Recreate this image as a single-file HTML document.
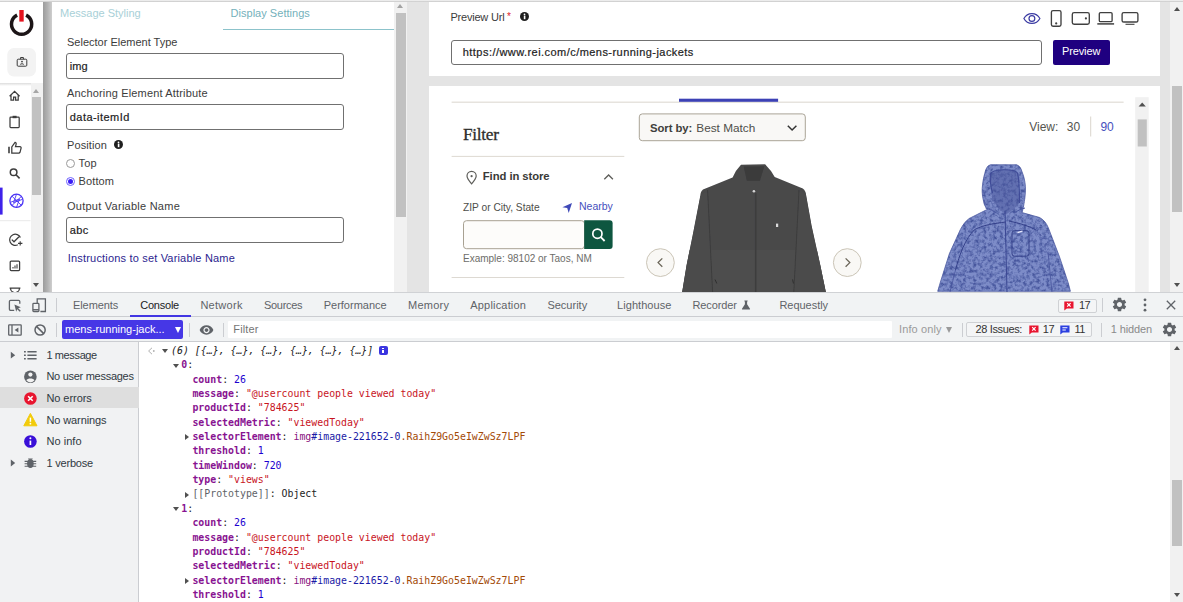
<!DOCTYPE html>
<html lang="en"><head><meta charset="utf-8"><title>Preview</title>
<style>
*{box-sizing:border-box;margin:0;padding:0}
html,body{width:1183px;height:602px;overflow:hidden;background:#e8e8e8}
body{position:relative;font-family:"Liberation Sans",sans-serif;font-size:11px;color:#333}
.abs,.abs *{position:absolute}
.t{position:absolute;white-space:pre;line-height:1}
/* ---------- app area ---------- */
#app{position:absolute;left:0;top:0;width:1183px;height:292px;background:#e4e4e4;overflow:hidden}
#topline{position:absolute;left:0;top:0;width:1183px;height:1.700px;background:linear-gradient(#ececec 0,#ececec 45%,#cfcfcf 60%,#d6d6d6 100%);z-index:50}
#side{position:absolute;left:0;top:0;width:43px;height:292px;background:#fff}
#sideshadow{position:absolute;left:43px;top:0;width:9.600px;height:292px;background:linear-gradient(90deg,#9c9c9c 0,#b2b2b2 45%,#cccccc 86%,#fff 100%)}
#panel{position:absolute;left:52px;top:0;width:342.200px;height:292px;background:#fff}
.lbl{color:#3c3c3c;font-size:11px}
.inp{position:absolute;left:66px;width:278px;height:26px;border:1px solid #707070;border-radius:3px;background:#fff}
.inp span{position:absolute;left:3px;top:7px;font-size:11px;color:#222;-webkit-text-stroke:.2px #222;line-height:1;white-space:pre}
.vsb{position:absolute;background:#f1f1f1}
.vsb i{position:absolute;background:#c1c1c1}
.arr-up{position:absolute;width:0;height:0;border-left:3.5px solid transparent;border-right:3.5px solid transparent;border-bottom:4px solid #505050}
.arr-dn{position:absolute;width:0;height:0;border-left:3.5px solid transparent;border-right:3.5px solid transparent;border-top:4px solid #505050}
.card{position:absolute;background:#fff}
/* ---------- devtools ---------- */
#dt{position:absolute;left:0;top:292px;width:1183px;height:310px;background:#fff;border-top:1.400px solid #d0d2d5;font-size:11px;color:#5f6368}
#tabs{position:absolute;left:0;top:0;width:1183px;height:24px;background:#f1f3f4;border-bottom:1px solid #cbcdd1}
#tool{position:absolute;left:0;top:24px;width:1183px;height:25px;background:#f1f3f4;border-bottom:1px solid #cbcdd1}
.tab{position:absolute;top:7px;line-height:1;white-space:pre;color:#5f6368}
.sep{position:absolute;width:1px;background:#cbcdd1}
#csb{position:absolute;left:0;top:48.600px;width:139px;height:261px;background:#f1f2f3;border-right:1px solid #cbcdd1}
.row{position:absolute;left:0;width:139px;height:21px}
.row .t{left:46px;top:5px;color:#303942}
#con{position:absolute;left:140px;top:48.600px;width:1043px;height:261px;background:#fff;font-family:"DejaVu Sans Mono","Liberation Mono",monospace;font-size:9.9px}
.ln{position:absolute;white-space:pre;line-height:1;height:12px}
.k{color:#881391;font-weight:bold}
.n{color:#1c00cf}
.s{color:#c8141e}
.g{color:#5f6368}
.d{color:#222}
.tri{position:absolute;width:0;height:0}
</style></head><body>
<div id="app">
<div id="side">
<svg style="position:absolute;left:0;top:0" width="43" height="84" viewBox="0 0 43 84">
<path d="M17.1 15.1 A10.1 10.1 0 1 0 26.1 15.1" fill="none" stroke="#1c1517" stroke-width="3.5"/>
<rect x="19.3" y="10" width="4.4" height="11.6" fill="#e5141f"/>
<rect x="7.3" y="48.1" width="28.7" height="28.4" rx="6.5" fill="#f3f3f3"/>
<g fill="none" stroke="#3a3a3a" stroke-width="1">
<rect x="17.2" y="59.2" width="9.6" height="7" rx="1"/>
<path d="M20.6 59.2v-1.7h2.8v1.7"/>
<circle cx="22" cy="61.6" r=".9" fill="#3a3a3a" stroke="none"/>
<path d="M20.2 64.6c.3-1.1 3.3-1.1 3.6 0" />
</g>
</svg>
<div style="position:absolute;left:0;top:83px;width:43px;height:3px;background:linear-gradient(#dcdcdc,#fff)"></div>
<div class="vsb" style="left:30.600px;top:83px;width:12px;height:209px"><i style="left:1.100px;top:14.200px;width:9.300px;height:98.200px"></i><b class="arr-up" style="left:2.400px;top:5.900px;border-bottom-color:#a6a6a6"></b><b class="arr-dn" style="left:2.400px;top:200px"></b></div>
<svg style="position:absolute;left:0;top:84px" width="31" height="208" viewBox="0 84 31 208" fill="none" stroke="#3d3d3d" stroke-width="1.25">
<!-- home -->
<path d="M9.6 96.2 14.6 91.4 19.6 96.2M11 95v5.2h2.6v-3h2v3h2.6V95"/>
<!-- clipboard -->
<rect x="10" y="117.2" width="9.2" height="10.3" rx=".8"/><rect x="12.6" y="115.8" width="4" height="2.4" fill="#3d3d3d" stroke="none"/>
<!-- thumb -->
<path d="M9 146.8v6.4" stroke-width="1.6"/><path d="M11.8 153.2v-6.2l3.2-4.6c1 .2 1.4 1 1.1 2l-.6 2.2h4.4c.9 0 1.4.7 1.2 1.5l-1.1 4.2c-.2.6-.7.9-1.3.9z"/>
<!-- search -->
<circle cx="13.6" cy="172.3" r="3.3" stroke-width="1.5"/><path d="M16 174.8l3.6 3.6" stroke-width="1.6"/>
<!-- active -->
<rect x="0" y="187.6" width="2.6" height="27" fill="#3f22ea" stroke="none"/>
<g stroke="#4a34f5" stroke-width="1.3"><circle cx="16.5" cy="200.8" r="6.6"/><path d="M12 196.2l9.2 9M21.4 196.4l-9.4 9M16.5 194.2l-3 8.4 8.8-3.2M16.5 207.4l3-8.4-8.8 3.2" stroke-width=".9"/></g>
<path d="M0 220.7h30.5" stroke="#e9e9e9" stroke-width="1"/>
<!-- check plus -->
<path d="M20.4 237.6a5.6 5.6 0 1 0-2.6 7.2"/><path d="M11.8 239.6l2.2 2.2 5-5"/><path d="M20.2 241.2v4.4M18 243.4h4.4" stroke-width="1.1"/>
<!-- chart -->
<rect x="10.2" y="261" width="9.4" height="9.6" rx="1"/><path d="M13 268.4v-1.4M15 268.4v-2.8M17 268.4v-4.2" stroke-width="1.1"/>
<!-- trophy -->
<path d="M9.6 288h10.8M10.6 288.4c0 2 1.4 3.6 3 3.6M19.4 288.4c0 2-1.4 3.6-3 3.6"/>
</svg>
</div>
<div id="sideshadow"></div>
<div id="panel">
<span class="t" id="p1" style="left:8px;top:8px;color:#a8d0d7">Message Styling</span>
<span class="t" id="p2" style="left:178.5px;top:8px;color:#74b1bb;letter-spacing:.03px">Display Settings</span>
<div style="position:absolute;left:171px;top:29px;width:171px;height:1px;background:#8cc3cb"></div>
<span class="t lbl" id="p3" style="left:15px;top:37px">Selector Element Type</span>
<div class="inp" style="left:13.8px;top:53px"><span>img</span></div>
<span class="t lbl" id="p4" style="left:15px;top:88.3px;letter-spacing:.16px">Anchoring Element Attribute</span>
<div class="inp" style="left:13.8px;top:104px"><span style="letter-spacing:.45px">data-itemId</span></div>
<span class="t lbl" id="p5" style="left:15px;top:139.9px;letter-spacing:.1px">Position</span>
<svg style="position:absolute;left:61.900px;top:140px" width="9" height="9" viewBox="0 0 9 9"><circle cx="4.5" cy="4.5" r="4.5" fill="#1f1f1f"/><rect x="3.8" y="3.6" width="1.6" height="3.6" fill="#fff"/><circle cx="4.5" cy="2.3" r=".9" fill="#fff"/></svg>
<div style="position:absolute;left:13.600px;top:158.900px;width:9.200px;height:9.200px;border:1px solid #9a9a9a;border-radius:50%;background:#fff"></div>
<span class="t lbl" id="p6" style="left:26.600px;top:157.500px;letter-spacing:.1px">Top</span>
<div style="position:absolute;left:13.600px;top:176.900px;width:9.200px;height:9.200px;border:1px solid #6f62ff;border-radius:50%;background:#fff"><i style="position:absolute;left:1.100px;top:1.100px;width:5px;height:5px;border-radius:50%;background:#3a1cf5"></i></div>
<span class="t lbl" id="p7" style="left:26.600px;top:175.500px;letter-spacing:.1px">Bottom</span>
<span class="t lbl" id="p8" style="left:15px;top:200.8px;letter-spacing:.25px">Output Variable Name</span>
<div class="inp" style="left:13.8px;top:217px"><span style="letter-spacing:.3px">abc</span></div>
<span class="t" id="p9" style="left:15.8px;top:252.6px;color:#2c1e8f;letter-spacing:.18px">Instructions to set Variable Name</span>
</div>
<div class="vsb" style="left:394.200px;top:0;width:13px;height:292px"><i style="left:1.800px;top:12.700px;width:9.800px;height:204.100px"></i><b class="arr-up" style="left:3px;top:4.300px;border-bottom-color:#a3a3a3"></b></div>
<div class="card" id="card1" style="left:428.5px;top:0;width:731.5px;height:75.7px">
<span class="t lbl" id="c1" style="left:21.9px;top:12px;letter-spacing:-.2px">Preview Url</span>
<span class="t" style="left:78.500px;top:12.300px;color:#e0202a;font-size:10px">*</span>
<svg style="position:absolute;left:91.700px;top:12.400px" width="9" height="9" viewBox="0 0 9 9"><circle cx="4.5" cy="4.5" r="4.5" fill="#1f1f1f"/><rect x="3.8" y="3.6" width="1.6" height="3.6" fill="#fff"/><circle cx="4.5" cy="2.3" r=".9" fill="#fff"/></svg>
<div class="inp" style="left:22.100px;top:39.500px;width:591.200px;height:25.300px"><span id="c2" style="left:11.200px;top:6.600px;letter-spacing:.45px">https://www.rei.com/c/mens-running-jackets</span></div>
<div style="position:absolute;left:624.1px;top:39.6px;width:57.5px;height:25.1px;background:#1f0080;border-radius:2px"><span class="t" id="c3" style="left:9.3px;top:6.4px;color:#fff;font-size:11px;letter-spacing:-.1px">Preview</span></div>
<svg style="position:absolute;left:590px;top:8px" width="125" height="22" viewBox="1018.5 8 125 22" fill="none" stroke="#404040" stroke-width="1.350">
<g stroke="#3b3ba3" stroke-width="1.2"><path d="M1023.4 18.5c3.6-6.6 12.4-6.6 16 0-3.6 6.6-12.4 6.600-16 0z"/><circle cx="1031.400" cy="18.5" r="2.900"/></g>
<rect x="1050.9" y="10.6" width="9.6" height="15.6" rx="1.6"/><circle cx="1055.700" cy="23.400" r="1.100" fill="#404040" stroke="none"/>
<rect x="1071.8" y="12.6" width="17" height="11.6" rx="1.8"/><circle cx="1085.400" cy="18.400" r="1.100" fill="#404040" stroke="none"/>
<rect x="1098.800" y="12.6" width="12.800" height="9" rx="1.200"/><path d="M1096.800 23.900h16.800" stroke-width="1.500"/>
<rect x="1121.600" y="12.6" width="15.800" height="9.400" rx="1.600"/><path d="M1125 24.300h9" stroke-width="1.100"/>
</svg>
</div>
<div class="card" id="card2" style="left:428.5px;top:86.3px;width:731.5px;height:206px;overflow:hidden">
<div id="pg" style="position:absolute;left:-428.5px;top:-86.3px;width:1183px;height:292px">
<svg id="pgsvg" style="position:absolute;left:0;top:0" width="1183" height="292" viewBox="0 0 1183 292">
<rect x="451.6" y="101.700" width="672" height=".9" fill="#d6d1c8"/>
<rect x="679" y="98.700" width="99.100" height="3.100" fill="#3c41b5"/>
<rect x="451.6" y="155.9" width="172.7" height=".9" fill="#dad5cd"/>
<rect x="451.6" y="277.1" width="172.7" height=".9" fill="#dad5cd"/>
<!-- sort box -->
<rect x="639.3" y="113.9" width="166" height="26.8" rx="3" fill="#f9f8f6" stroke="#aaa497" stroke-width="1"/>
<path d="M787.8 125.8l4.3 4.2 4.3-4.2" fill="none" stroke="#333" stroke-width="1.5"/>
<!-- pin -->
<path d="M471.600 183.800c-2.800-3.200-4.600-5.400-4.600-7.800a4.600 4.600 0 0 1 9.200 0c0 2.400-1.800 4.600-4.600 7.800z" fill="none" stroke="#5e5e5a" stroke-width="1.200"/><circle cx="471.600" cy="176.200" r="1.100" fill="#5e5e5a"/>
<path d="M604.300 179.300l4.300-4.300 4.300 4.300" fill="none" stroke="#5e5e5a" stroke-width="1.300"/>
<!-- nearby arrow -->
<path d="M562.400 207.200l9.600-4.300-3.300 10-1.500-4.800z" fill="#3f49b8"/>
<!-- zip input -->
<rect x="463.500" y="220.700" width="121" height="28" rx="3" fill="#fdfcfa" stroke="#a8a192" stroke-width="1"/>
<path d="M584.200 220.200h25.400a3 3 0 0 1 3 3v22.800a3 3 0 0 1-3 3h-25.400z" fill="#0e5640"/>
<circle cx="597.400" cy="233.700" r="4.600" fill="none" stroke="#fff" stroke-width="1.700"/><path d="M600.800 237.200l3.800 3.800" stroke="#fff" stroke-width="1.800"/>
<!-- arrows -->
<circle cx="660.4" cy="262.600" r="13.900" fill="#f9f8f5" stroke="#cbc5b7" stroke-width="1"/><path d="M662.300 258.400l-4.200 4.200 4.200 4.200" fill="none" stroke="#6a6558" stroke-width="1.300"/>
<circle cx="847.300" cy="262.600" r="13.900" fill="#f9f8f5" stroke="#cbc5b7" stroke-width="1"/><path d="M845.600 258.400l4.200 4.200-4.200 4.200" fill="none" stroke="#6a6558" stroke-width="1.300"/>
<!-- view sep -->
<rect x="1090.200" y="116.500" width="1" height="20" fill="#dad5cd"/>
<!-- inner scrollbar -->
<rect x="1135.200" y="97.200" width="13.500" height="195" fill="#f1f1f1"/>
<rect x="1137.700" y="119.400" width="9.100" height="27.100" fill="#c1c1c1"/>
<path d="M1138.600 106.400l3.600-4 3.600 4z" fill="#505050"/>
<defs>
<filter id="spk" x="0" y="0" width="100%" height="100%" color-interpolation-filters="sRGB"><feTurbulence type="fractalNoise" baseFrequency="0.3" numOctaves="3" seed="7" result="n"/><feColorMatrix in="n" values="0 0 0 0 .27  0 0 0 0 .33  0 0 0 0 .61  0 0 0 2.5 -1.0"/><feComposite in2="SourceGraphic" operator="in"/></filter>
<filter id="bl"><feGaussianBlur stdDeviation=".45"/></filter>
<clipPath id="gj"><path d="M741 164.800L765.100 164.200L771 171L774.700 177.100L802.800 188.500Q806 191 806.100 195L811.600 225.800L820.300 265.300L825.800 292H682.200L686.600 265.300L693.200 232.400L700.200 196.200Q700.500 191.500 703 189.600L732.600 177.500L735.900 171Z"/></clipPath>
</defs>
<g filter="url(#bl)">
<g clip-path="url(#gj)">
<rect x="680" y="160" width="150" height="135" fill="#49494a"/>
<rect x="680" y="250" width="150" height="45" fill="#4e4e4e"/>
<path d="M682 292l4.600-26.700 6.600-32.900 7-36.200 5 -4 2.400 0 5 100z" fill="#4b4b4c"/>
<path d="M826 292l-5.700-26.700-8.700-39.500-5.500-30.800-4-4.500-3 0-5 101.500z" fill="#4b4b4c"/>
<path d="M707.600 190l5 102M799 190l-5.200 102" stroke="#3b3b3b" stroke-width=".9" fill="none"/>
<path d="M743.600 166.600l20.800-.4-4.400 14.600h-13.200z" fill="#3b3b3b"/>
<path d="M755.700 193v99" stroke="#3c3c3c" stroke-width="1.600"/>
<circle cx="753.900" cy="191.200" r="1.300" fill="#d4d4d4"/>
<rect x="776" y="223.600" width="2.200" height="3.400" fill="#dcdcdc"/>
<path d="M715 279.500l1.800 4M792.600 279.500l.8 4" stroke="#2e2e2e" stroke-width="1"/>
</g>
<g id="bj">
<path id="bjp" d="M987.500 209.300c-2.400-2.600-3.600-5-3.800-7.600-1.200-4.400-1.700-8.800-1.500-13.200.4-5.600 1.200-10.600 2.600-15.300 1-4.400 2.400-7.400 5.500-8.400h26.300c3 .8 4.400 3.400 5.500 7.200 1.900 4.500 2.900 9.300 3.300 14.300.2 5.200-.2 10.300-1.100 15.400-.4 3.600-1.200 7.300-2.200 10.900l17.500 4.900c4.400 2.400 7 6 8.800 10.500l11 28.500 8.800 26.300 2.200 8.500h-132.700l2.700-9.200 9-28.500 11-24.100c2.400-4.600 5-8.200 8.800-11z" fill="#7d8cc8" stroke="#4f5da2" stroke-width=".8"/>
<path d="M987.500 209.300c-2.400-2.600-3.600-5-3.800-7.600-1.200-4.400-1.700-8.800-1.500-13.200.4-5.600 1.200-10.600 2.600-15.300 1-4.400 2.400-7.400 5.500-8.400h26.300c3 .8 4.400 3.400 5.500 7.200 1.900 4.500 2.900 9.300 3.300 14.300.2 5.200-.2 10.300-1.100 15.400-.4 3.600-1.200 7.300-2.200 10.900l17.500 4.900c4.400 2.400 7 6 8.800 10.500l11 28.500 8.800 26.300 2.200 8.500h-132.700l2.700-9.200 9-28.500 11-24.100c2.400-4.600 5-8.200 8.800-11z" fill="#000" filter="url(#spk)"/>
<path d="M990.500 174c2-5.500 24-5.500 27-1l2 30c-3 4-8 8-13.500 11.500-5-3-10-8.500-14-16z" fill="#4c5a9e" opacity=".55"/>
<path d="M992.500 193c-2-7-2.600-13-2-19 2-5.500 24-5.500 27-1 1.500 6 2 14 2 30" fill="none" stroke="#3f4c98" stroke-width="1.200"/>
<path d="M985.500 208c4 1 8 3 11 5M1025 208c-4 1-8 3-11 5" fill="none" stroke="#4a58a2" stroke-width="1"/>
<path d="M1005 211l2 81" stroke="#3d4a95" stroke-width="1.100"/>
<path d="M955.400 270.500c4-16 10-32 19.300-41 10-5 20-6 31-7.500M1009 221c10 2 20 5 27 9" fill="none" stroke="#34408a" stroke-width="1"/>
<path d="M950 292l5.400-21.500M1052 292l-4-40" fill="none" stroke="#46539c" stroke-width=".8"/>
<rect x="1012" y="230.700" width="17" height="25.500" rx="2.500" fill="none" stroke="#34408a" stroke-width="1"/>
<path d="M1017.500 232.600l5-1.600" stroke="#eef" stroke-width="1.200"/>
</g>
</g>
</svg>
<span class="t" style="left:463px;top:125.700px;font:17.300px 'Liberation Serif',serif;color:#2e2e2b;letter-spacing:-.3px;line-height:1;-webkit-text-stroke:.3px #2e2e2b">Filter</span>
<span class="t" style="left:650px;top:122.800px;font:bold 11.300px 'Liberation Sans',sans-serif;color:#3f3f3c;line-height:1;letter-spacing:-.05px">Sort by:</span>
<span class="t" style="left:696.300px;top:122.600px;font:11.800px 'Liberation Sans',sans-serif;color:#4e4e4a;line-height:1">Best Match</span>
<span class="t" style="left:482.800px;top:170.500px;font:bold 11.300px 'Liberation Sans',sans-serif;color:#3a3a37;line-height:1;letter-spacing:-.08px">Find in store</span>
<span class="t" style="left:463px;top:203.200px;font:10.200px 'Liberation Sans',sans-serif;color:#4e4e4a;line-height:1">ZIP or City, State</span>
<span class="t" style="left:579px;top:201px;font:10.500px 'Liberation Sans',sans-serif;color:#4650bd;line-height:1">Nearby</span>
<span class="t" style="left:463px;top:254px;font:10px 'Liberation Sans',sans-serif;color:#6d6d69;line-height:1">Example: 98102 or Taos, NM</span>
<span class="t" style="left:1029.200px;top:121px;font:12px 'Liberation Sans',sans-serif;color:#55554f;line-height:1">View:</span>
<span class="t" style="left:1066.800px;top:121px;font:12px 'Liberation Sans',sans-serif;color:#55554f;line-height:1">30</span>
<span class="t" style="left:1100.400px;top:121px;font:12px 'Liberation Sans',sans-serif;color:#4650bd;line-height:1">90</span>
</div>
</div>
<div class="vsb" style="left:1170.2px;top:0;width:12.8px;height:292px"><i style="left:2.3px;top:85.5px;width:9.3px;height:126.7px"></i><b class="arr-up" style="left:3.500px;top:6.700px"></b><b class="arr-dn" style="left:3.500px;top:283px"></b></div>
</div>
<div id="dt">
<div id="tabs">
<svg style="position:absolute;left:0;top:0" width="60" height="24" viewBox="0 293 60 24" fill="none" stroke="#5f6368" stroke-width="1.300">
<path d="M14.200 310.300h-3.600a1.200 1.200 0 0 1-1.200-1.200v-7.600a1.200 1.200 0 0 1 1.200-1.200h8a1.200 1.200 0 0 1 1.200 1.200v2.200"/><path d="M14.400 304.600l6.400 2.600-2.600 1 2.600 2.600-1 1-2.600-2.600-1 2.600z" fill="#5f6368" stroke="none"/>
<path d="M37.200 303.400v-4.600h8.200v12.700h-5"/><rect x="32.900" y="303.400" width="6" height="8.100" rx=".8"/><path d="M32.900 309.700h6"/>
</svg>
<div class="sep" style="left:56px;top:5.300px;height:13.500px"></div>
<span class="tab" style="left:73px;top:6.600px;letter-spacing:-0.08px;color:#5f6368">Elements</span>
<span class="tab" style="left:140.2px;top:6.600px;letter-spacing:-0.22px;color:#202124">Console</span>
<span class="tab" style="left:200.4px;top:6.600px;letter-spacing:0.28px;color:#5f6368">Network</span>
<span class="tab" style="left:264.1px;top:6.600px;letter-spacing:-0.34px;color:#5f6368">Sources</span>
<span class="tab" style="left:323.7px;top:6.600px;letter-spacing:0px;color:#5f6368">Performance</span>
<span class="tab" style="left:408.1px;top:6.600px;letter-spacing:0.23px;color:#5f6368">Memory</span>
<span class="tab" style="left:470.3px;top:6.600px;letter-spacing:0.18px;color:#5f6368">Application</span>
<span class="tab" style="left:547.4px;top:6.600px;letter-spacing:0px;color:#5f6368">Security</span>
<span class="tab" style="left:617.1px;top:6.600px;letter-spacing:0.05px;color:#5f6368">Lighthouse</span>
<span class="tab" style="left:692.5px;top:6.600px;letter-spacing:-0.12px;color:#5f6368">Recorder</span>
<span class="tab" style="left:779.4px;top:6.600px;letter-spacing:-0.03px;color:#5f6368">Requestly</span>
<div style="position:absolute;left:130px;top:22.400px;width:60.500px;height:1.600px;background:#4236e3"></div>
<svg style="position:absolute;left:741px;top:7px" width="10" height="10" viewBox="0 0 10 10"><path d="M3.400.6h3.200v1h-.5v2.600l2.900 4.600c.2.400 0 .8-.5.800h-7c-.5 0-.7-.4-.5-.8l2.900-4.600v-2.600h-.5z" fill="#5f6368"/></svg>
<div style="position:absolute;left:1058px;top:5.700px;width:38.500px;height:14px;border:1px solid #cfd1d4;border-radius:2px;background:#f4f5f6"></div>
<svg style="position:absolute;left:1064.300px;top:8.200px" width="10" height="10" viewBox="0 0 10 10"><path d="M.3.400h9.200v7h-6.700l-2.500 2.200z" fill="#e8152f"/><path d="M3.200 2.200l3.400 3.400M6.600 2.200l-3.400 3.400" stroke="#fff" stroke-width="1.200"/></svg>
<span class="tab" style="left:1079px;top:7px;color:#333;letter-spacing:-.5px">17</span>
<div class="sep" style="left:1102px;top:5.300px;height:13.500px"></div>
<svg style="position:absolute;left:1110.500px;top:3.400px" width="17" height="17" viewBox="0 0 24 24"><path fill="#5f6368" d="M19.140 12.940c.04-.3.060-.61.060-.94 0-.32-.02-.64-.07-.94l2.030-1.580a.49.490 0 0 0 .12-.61l-1.920-3.320a.488.488 0 0 0-.59-.22l-2.390.96c-.5-.38-1.030-.7-1.620-.94l-.36-2.540a.484.484 0 0 0-.48-.41h-3.840c-.24 0-.43.170-.47.410l-.36 2.540c-.59.240-1.130.57-1.620.94l-2.390-.96c-.22-.08-.47 0-.59.220L2.740 8.870c-.12.210-.08.470.12.610l2.030 1.580c-.05.300-.09.630-.09.940s.02.640.07.940l-2.030 1.580a.49.490 0 0 0-.12.610l1.920 3.320c.12.220.37.290.59.220l2.390-.96c.5.380 1.030.7 1.620.94l.36 2.540c.05.240.24.410.48.410h3.840c.24 0 .44-.17.470-.41l.36-2.540c.59-.24 1.130-.56 1.620-.94l2.390.96c.22.080.47 0 .59-.22l1.920-3.320c.12-.22.070-.47-.12-.61l-2.010-1.580zM12 15.600c-1.980 0-3.600-1.620-3.600-3.600s1.620-3.600 3.600-3.600 3.600 1.620 3.600 3.600-1.620 3.600-3.600 3.600z"/></svg>
<svg style="position:absolute;left:1142.700px;top:4.800px" width="4" height="14" viewBox="0 0 4 14"><circle cx="2" cy="1.800" r="1.400" fill="#5f6368"/><circle cx="2" cy="7" r="1.400" fill="#5f6368"/><circle cx="2" cy="12.200" r="1.400" fill="#5f6368"/></svg>
<svg style="position:absolute;left:1166.400px;top:7.200px" width="10" height="10" viewBox="0 0 10 10"><path d="M.8.800l8.400 8.400M9.200.800l-8.400 8.400" stroke="#5f6368" stroke-width="1.300"/></svg>
</div>
<div id="tool">
<svg style="position:absolute;left:0;top:0" width="60" height="25" viewBox="0 317 60 25" fill="none" stroke="#5f6368" stroke-width="1.300">
<rect x="8.700" y="324.900" width="12.500" height="10.200" rx=".6"/><path d="M12 324.900v10.200"/><path d="M18.400 327.400v5.200l-3.800-2.600z" fill="#5f6368" stroke="none"/>
<circle cx="40.100" cy="330" r="5.100" stroke-width="1.500"/><path d="M36.500 326.400l7.200 7.200" stroke-width="1.500"/>
</svg>
<div class="sep" style="left:56px;top:6px;height:13.500px"></div>
<div style="position:absolute;left:62.100px;top:2.600px;width:121px;height:19.600px;background:#4637e6;border-radius:2px"></div>
<span class="tab" id="sel" style="left:65.100px;top:7.300px;color:#fff;letter-spacing:-.01px">mens-running-jack...</span>
<div style="position:absolute;left:174.600px;top:9.800px;width:0;height:0;border-left:3.500px solid transparent;border-right:3.500px solid transparent;border-top:6.500px solid #fff"></div>
<div class="sep" style="left:189px;top:6px;height:13.500px"></div>
<svg style="position:absolute;left:198.500px;top:6px" width="15" height="14" viewBox="0 0 24 22"><path fill="#5f6368" d="M12 3.500C7 3.500 2.730 6.610 1 11c1.730 4.390 6 7.500 11 7.500s9.270-3.110 11-7.500c-1.730-4.390-6-7.500-11-7.500zM12 16c-2.760 0-5-2.240-5-5s2.240-5 5-5 5 2.240 5 5-2.240 5-5 5zm0-8c-1.660 0-3 1.340-3 3s1.340 3 3 3 3-1.340 3-3-1.340-3-3-3z"/></svg>
<div class="sep" style="left:222.500px;top:6px;height:13.500px"></div>
<div style="position:absolute;left:228.200px;top:3.600px;width:663.700px;height:17.600px;background:#fff;border-radius:1px"></div>
<span class="tab" style="left:233.300px;top:7.300px;color:#757575;letter-spacing:.15px">Filter</span>
<span class="tab" style="left:899px;top:7.300px;color:#9a9a9a;letter-spacing:.12px">Info only</span>
<div style="position:absolute;left:946.400px;top:10.200px;width:0;height:0;border-left:3.300px solid transparent;border-right:3.300px solid transparent;border-top:6px solid #9a9a9a"></div>
<div class="sep" style="left:962px;top:6px;height:13.500px"></div>
<div style="position:absolute;left:966.200px;top:5.200px;width:126px;height:14.800px;border:1px solid #cfd1d4;border-radius:2px;background:#f4f5f6"></div>
<span class="tab" style="left:975.600px;top:7.300px;color:#333;letter-spacing:-.37px">28 Issues:</span>
<svg style="position:absolute;left:1028.800px;top:8.200px" width="10" height="10" viewBox="0 0 10 10"><path d="M.3.400h9.200v7h-6.700l-2.500 2.200z" fill="#e8152f"/><path d="M3.200 2.200l3.400 3.400M6.600 2.200l-3.400 3.400" stroke="#fff" stroke-width="1.200"/></svg>
<span class="tab" style="left:1042.800px;top:7.300px;color:#333;letter-spacing:-.5px">17</span>
<svg style="position:absolute;left:1059.800px;top:8.200px" width="10" height="10" viewBox="0 0 10 10"><path d="M.3.400h9.200v7h-6.700l-2.500 2.200z" fill="#2b3fe0"/><path d="M2.400 2.700h5M2.400 5h3.400" stroke="#fff" stroke-width="1.100"/></svg>
<span class="tab" style="left:1074.500px;top:7.300px;color:#333;letter-spacing:-.5px">11</span>
<div class="sep" style="left:1101px;top:6px;height:13.500px"></div>
<span class="tab" style="left:1110.700px;top:7.300px;color:#8a8a8a;letter-spacing:-.1px">1 hidden</span>
<svg style="position:absolute;left:1161.200px;top:3.500px" width="17" height="17" viewBox="0 0 24 24"><path fill="#5f6368" d="M19.140 12.940c.04-.3.060-.61.060-.94 0-.32-.02-.64-.07-.94l2.030-1.580a.49.490 0 0 0 .12-.61l-1.920-3.320a.488.488 0 0 0-.59-.22l-2.390.96c-.5-.38-1.030-.7-1.620-.94l-.36-2.540a.484.484 0 0 0-.48-.41h-3.840c-.24 0-.43.170-.47.410l-.36 2.540c-.59.240-1.130.57-1.620.94l-2.390-.96c-.22-.08-.47 0-.59.220L2.740 8.870c-.12.210-.08.470.12.610l2.030 1.580c-.05.300-.09.630-.09.940s.02.640.07.940l-2.030 1.580a.49.490 0 0 0-.12.610l1.920 3.320c.12.220.37.290.59.220l2.390-.96c.5.380 1.030.7 1.620.94l.36 2.540c.05.240.24.410.48.410h3.840c.24 0 .44-.17.470-.41l.36-2.540c.59-.24 1.130-.56 1.620-.94l2.390.96c.22.080.47 0 .59-.22l1.920-3.320c.12-.22.070-.47-.12-.61l-2.010-1.580zM12 15.600c-1.980 0-3.600-1.620-3.600-3.600s1.620-3.600 3.600-3.600 3.600 1.620 3.600 3.600-1.620 3.600-3.600 3.600z"/></svg>
</div>
<div id="csb">
<div style="position:absolute;left:0;top:45.700px;width:139px;height:20.800px;background:#dedede"></div>
<span class="t" style="left:46.400px;top:8.7px;color:#303942;letter-spacing:-0.37px">1 message</span>
<span class="t" style="left:46.400px;top:29.8px;color:#303942;letter-spacing:-0.28px">No user messages</span>
<span class="t" style="left:46.400px;top:51.0px;color:#303942;letter-spacing:-0.05px">No errors</span>
<span class="t" style="left:46.400px;top:73.2px;color:#303942;letter-spacing:-0.1px">No warnings</span>
<span class="t" style="left:46.400px;top:94.2px;color:#303942;letter-spacing:0.06px">No info</span>
<span class="t" style="left:46.400px;top:116.4px;color:#303942;letter-spacing:-0.19px">1 verbose</span>
<svg style="position:absolute;left:0;top:0" width="139" height="140" viewBox="0 342 139 140">
<path d="M10.800 351.800l4.400 3.400-4.400 3.400z" fill="#5f6368"/><path d="M10.800 459.600l4.400 3.400-4.400 3.400z" fill="#5f6368"/>
<g stroke="#5f6368" stroke-width="1.500"><path d="M27.400 351.800h9.200M27.400 355.300h9.200M27.400 358.800h9.200"/><path d="M24 351.800h1.800M24 355.300h1.800M24 358.800h1.800"/></g>
<circle cx="30.400" cy="376.800" r="6.300" fill="#5f6368"/><circle cx="30.400" cy="374.600" r="2.100" fill="#f3f3f3"/><path d="M26.300 380.300c1.200-2.400 7-2.400 8.200 0a5 5 0 0 1-8.200 0z" fill="#f3f3f3"/>
<circle cx="30.400" cy="398.500" r="6.300" fill="#e8152f"/><path d="M28.100 396.200l4.600 4.600M32.700 396.200l-4.600 4.600" stroke="#fff" stroke-width="1.600"/>
<path d="M30.400 413.400l6.600 12.400h-13.200z" fill="#f2cb0a" stroke="#f2cb0a" stroke-width="1" stroke-linejoin="round"/><path d="M30.400 417.600v4.200" stroke="#fff" stroke-width="1.500"/><circle cx="30.400" cy="423.700" r=".9" fill="#fff"/>
<circle cx="30.400" cy="441.500" r="6.300" fill="#3a10d8"/><path d="M30.400 440.600v4.400" stroke="#fff" stroke-width="1.700"/><circle cx="30.400" cy="438.200" r="1" fill="#fff"/>
<g fill="#5f6368"><ellipse cx="30.400" cy="463.600" rx="3.300" ry="4.400"/><path d="M28 458.400h4.800l-.8 1.400h-3.200z"/></g><g stroke="#5f6368" stroke-width="1.100"><path d="M24.600 461.400h11.600M24.600 463.800h11.600M24.600 466.200h11.600"/></g>
</svg>
</div>
<div id="con">
<svg style="position:absolute;left:6.500px;top:5.200px" width="9" height="8" viewBox="0 0 9 8"><path d="M5 .8l-3.400 3.200 3.400 3.200" fill="none" stroke="#b0b0b0" stroke-width="1"/><circle cx="6.800" cy="4" r=".9" fill="#b0b0b0"/></svg>
<div class="tri" style="left:21.8px;top:7.90px;border-left:3.3px solid transparent;border-right:3.3px solid transparent;border-top:4.8px solid #505050"></div>
<div class="ln" style="left:31.1px;top:4.30px"><span style="font-style:italic;color:#222">(6) [{…}, {…}, {…}, {…}, {…}, {…}]</span></div>
<div style="position:absolute;left:238.800px;top:4.600px;width:8.900px;height:8.600px;border-radius:2px;background:#3a35e0"><i style="position:absolute;left:3.700px;top:3.600px;width:1.500px;height:3.400px;background:#fff"></i><i style="position:absolute;left:3.700px;top:1.600px;width:1.500px;height:1.300px;background:#fff"></i></div>
<div class="tri" style="left:32.7px;top:22.26px;border-left:3.3px solid transparent;border-right:3.3px solid transparent;border-top:4.8px solid #505050"></div>
<div class="ln" style="left:41.2px;top:18.66px"><span class="k">0</span><span class="d">:</span></div>
<div class="ln" style="left:52.4px;top:33.02px"><span class="k">count</span><span class="d">: </span><span class="n">26</span></div>
<div class="ln" style="left:52.4px;top:47.38px"><span class="k">message</span><span class="d">: </span><span class="s">"@usercount people viewed today"</span></div>
<div class="ln" style="left:52.4px;top:61.74px"><span class="k">productId</span><span class="d">: </span><span class="s">"784625"</span></div>
<div class="ln" style="left:52.4px;top:76.10px"><span class="k">selectedMetric</span><span class="d">: </span><span class="s">"viewedToday"</span></div>
<div class="tri" style="left:44.6px;top:92.56px;border-top:3.3px solid transparent;border-bottom:3.3px solid transparent;border-left:4.8px solid #505050"></div>
<div class="ln" style="left:52.4px;top:90.46px"><span class="k">selectorElement</span><span class="d">: </span><span style="color:#881280">img</span><span style="color:#1a1aa6">#image-221652-0</span><span style="color:#a34a08">.RaihZ9Go5eIwZwSz7LPF</span></div>
<div class="ln" style="left:52.4px;top:104.82px"><span class="k">threshold</span><span class="d">: </span><span class="n">1</span></div>
<div class="ln" style="left:52.4px;top:119.18px"><span class="k">timeWindow</span><span class="d">: </span><span class="n">720</span></div>
<div class="ln" style="left:52.4px;top:133.54px"><span class="k">type</span><span class="d">: </span><span class="s">"views"</span></div>
<div class="tri" style="left:44.6px;top:150.00px;border-top:3.3px solid transparent;border-bottom:3.3px solid transparent;border-left:4.8px solid #505050"></div>
<div class="ln" style="left:52.4px;top:147.90px"><span class="g">[[Prototype]]</span><span class="d">: Object</span></div>
<div class="tri" style="left:32.7px;top:165.86px;border-left:3.3px solid transparent;border-right:3.3px solid transparent;border-top:4.8px solid #505050"></div>
<div class="ln" style="left:41.2px;top:162.26px"><span class="k">1</span><span class="d">:</span></div>
<div class="ln" style="left:52.4px;top:176.62px"><span class="k">count</span><span class="d">: </span><span class="n">26</span></div>
<div class="ln" style="left:52.4px;top:190.98px"><span class="k">message</span><span class="d">: </span><span class="s">"@usercount people viewed today"</span></div>
<div class="ln" style="left:52.4px;top:205.34px"><span class="k">productId</span><span class="d">: </span><span class="s">"784625"</span></div>
<div class="ln" style="left:52.4px;top:219.70px"><span class="k">selectedMetric</span><span class="d">: </span><span class="s">"viewedToday"</span></div>
<div class="tri" style="left:44.6px;top:236.16px;border-top:3.3px solid transparent;border-bottom:3.3px solid transparent;border-left:4.8px solid #505050"></div>
<div class="ln" style="left:52.4px;top:234.06px"><span class="k">selectorElement</span><span class="d">: </span><span style="color:#881280">img</span><span style="color:#1a1aa6">#image-221652-0</span><span style="color:#a34a08">.RaihZ9Go5eIwZwSz7LPF</span></div>
<div class="ln" style="left:52.4px;top:248.42px"><span class="k">threshold</span><span class="d">: </span><span class="n">1</span></div>
<div class="vsb" style="left:1030px;top:0;width:13px;height:261px;background:#f1f1f1"><i style="left:2.200px;top:138.100px;width:9.600px;height:66.600px"></i><b class="arr-up" style="left:3.900px;top:4.700px"></b><b class="arr-dn" style="left:3.900px;top:251.500px"></b></div>
</div>
</div>
<div id="topline"></div>
</body></html>
